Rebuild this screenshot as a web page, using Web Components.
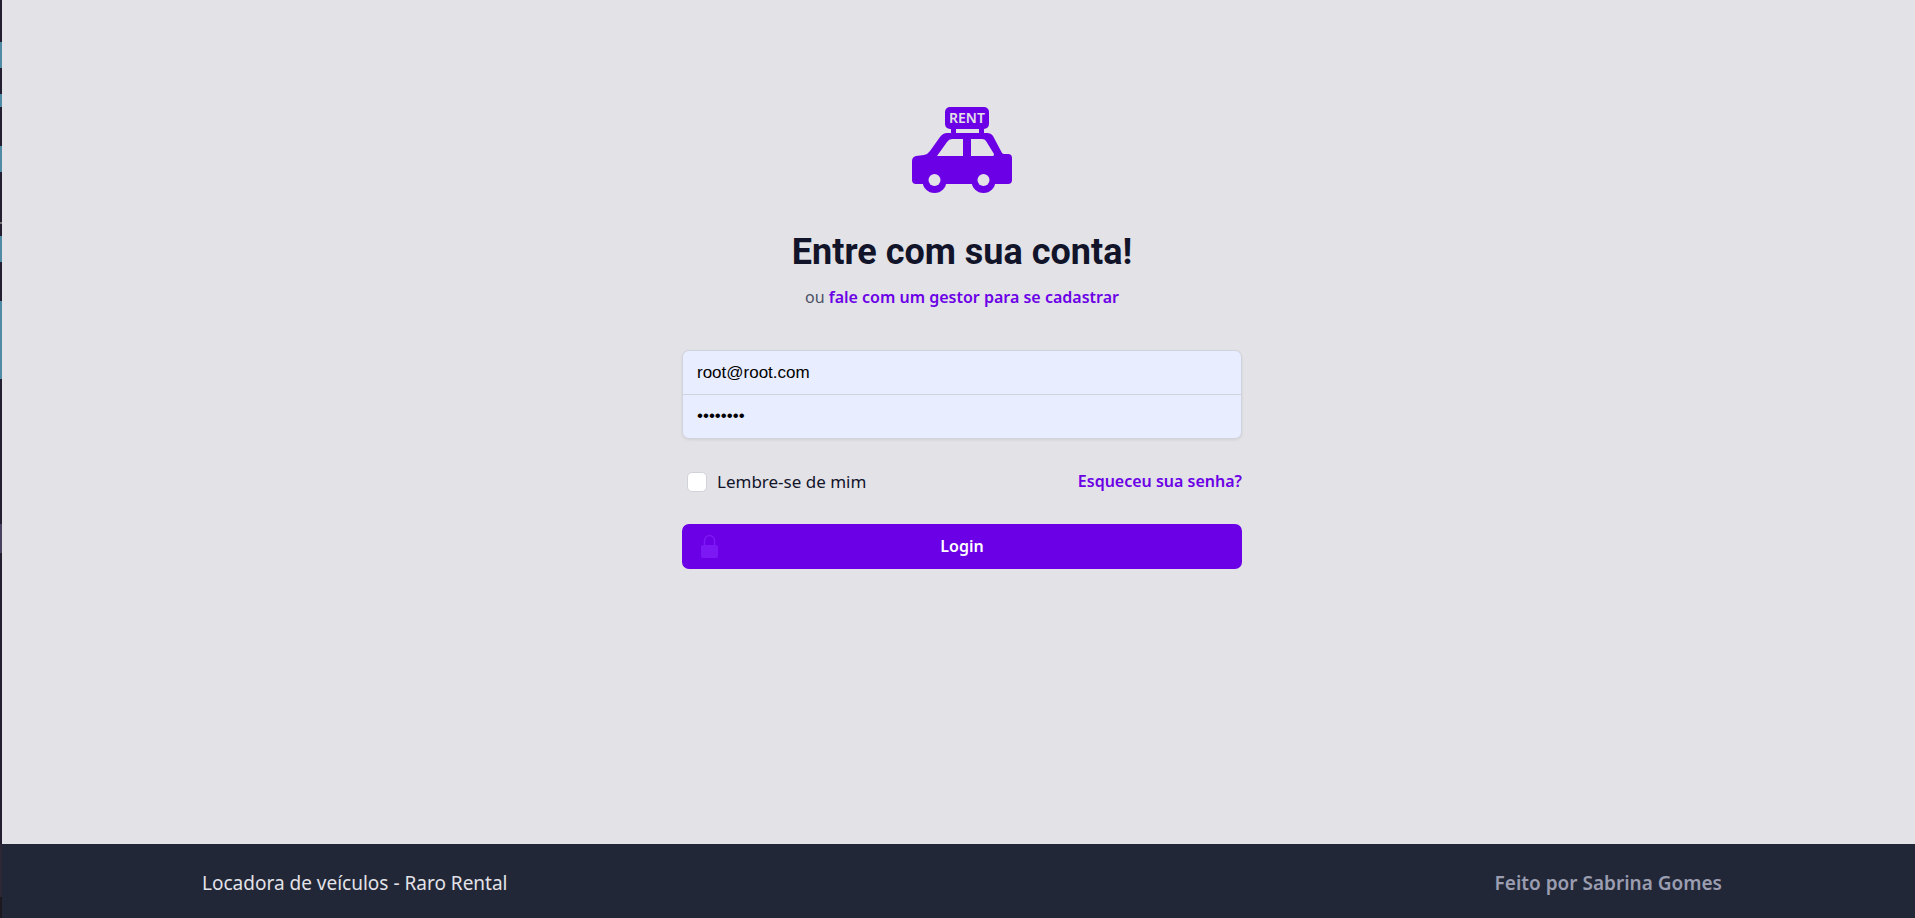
<!DOCTYPE html>
<html lang="pt-BR">
<head>
<meta charset="utf-8">
<meta name="viewport" content="width=device-width, initial-scale=1">
<title>Raro Rental</title>
<style>
  html, body { margin: 0; height: 100%; }
  body { background: #e3e2e7; color: #12142a; font-family: "Noto Sans", "Open Sans", sans-serif; }
</style>
</head>
<body>
<rental-page>
  <login-card slot="content">
    <rental-logo slot="logo"></rental-logo>
    <span slot="title">Entre com sua conta!</span>
  </login-card>
  <rental-footer slot="footer">
    <span>Locadora de veículos - Raro Rental</span>
    <strong slot="author">Feito por Sabrina Gomes</strong>
  </rental-footer>
</rental-page>

<script>
class BaseElement extends HTMLElement {
  constructor() {
    super();
    this.attachShadow({ mode: "open" }).innerHTML = this.constructor.markup;
  }
}

class RentalPage extends BaseElement {
  static markup = `
    <style>
      :host { display: flex; min-height: 100vh; }
      .edge {
        flex: none; width: 2px;
        background: linear-gradient(#231f31 0 42px, #4f8ba5 0 68px, #231f31 0 94px, #4f8ba5 0 107px,
          #231f31 0 146px, #4f8ba5 0 172px, #231f31 0 222px, #777479 0 224px, #231f31 0 236px,
          #4f8ba5 0 262px, #231f31 0 301px, #4f8ba5 0 379px, #231f31 0 524px, #48415f 0 553px,
          #231f31 0 844px, #2b2734 0 897px, #1b1820 0);
      }
      .page { flex: 1; min-width: 0; display: flex; flex-direction: column; }
      main { flex: 1; padding: 100px 16px 60px 23px; }
    </style>
    <div class="edge"></div>
    <div class="page">
      <main><slot name="content"></slot></main>
      <slot name="footer"></slot>
    </div>`;
}

class RentalLogo extends BaseElement {
  static markup = `
    <style>
      :host { display: block; width: 100px; height: 100px; color: #6b00e6; }
      svg { display: block; width: 100%; height: 100%; }
      text { font: 600 14px "Noto Sans", sans-serif; fill: #e3e2e7; }
    </style>
    <svg viewBox="0 0 100 100" role="img" aria-label="Rent">
      <g fill="currentColor">
        <rect x="33" y="7" width="44" height="22" rx="5"/>
        <path d="M39 28h5v5h23v-5h5v5h3q4 0 6 3L90 53q1 1 2 1h4q4 0 4 4v22q0 4-4 4H4q-4 0-4-4V61q0-4 4-5l8-1q4-1 6-4L28 37q3-4 7-4h4z"/>
        <circle cx="22.500" cy="81" r="12"/>
        <circle cx="71.500" cy="81" r="12"/>
      </g>
      <g fill="#e3e2e7">
        <path d="M25 56l10-14q2-3 5-3h11v17zM59 39h11q3 0 4 2l8 13q0 2-1 2H59z"/>
        <circle cx="22.500" cy="80" r="6"/>
        <circle cx="71.500" cy="80" r="6"/>
      </g>
      <text x="55" y="23" text-anchor="middle">RENT</text>
    </svg>`;
}

class LoginCard extends BaseElement {
  static markup = `
    <style>
      :host { display: block; max-width: 560px; margin: 0 auto; }
      * { box-sizing: border-box; }
      header { display: flex; flex-direction: column; align-items: center; text-align: center; }
      h1 { margin: 30px 0 0; font: 700 36px/45px Roboto, "Noto Sans", sans-serif; }
      p { margin: 10px 0 0; font-size: 16px; line-height: 25px; color: #4b5163; }
      a { color: #6b00e6; font-weight: 600; font-size: 16px; text-decoration: none; }
      form { display: grid; gap: 30px; margin-top: 40px; }
      .fields {
        border: 1px solid #d1d3db; border-radius: 7px; overflow: hidden;
        background: #e8eeff; box-shadow: 0 1px 3px rgb(0 0 0 / 8%);
      }
      .fields input {
        display: block; width: 100%; height: 43px; padding: 0 14px; border: 0; outline: 0;
        background: transparent; color: #000; font: 17px "Liberation Sans", Arial, sans-serif;
      }
      .fields input + input { height: 44px; padding-bottom: 2px; border-top: 1px solid #d1d3db; }
      .row { display: flex; align-items: center; justify-content: space-between; line-height: 25px; }
      label { display: flex; align-items: center; gap: 10px; font-size: 17px; }
      input[type=checkbox] {
        appearance: none; width: 20px; height: 20px; margin: 0 0 0 5px;
        background: #fff; border: 1px solid #d1d3db; border-radius: 5px;
      }
      input[type=checkbox]:checked { background: #6b00e6; }
      button {
        display: grid; grid-template-columns: 25px 1fr 25px; align-items: center;
        height: 45px; padding: 0 15px; border: 0; border-radius: 7px;
        background: #6b00e6; color: #fff; font: 600 16px/25px "Noto Sans", "Open Sans", sans-serif;
        cursor: pointer;
      }
      button svg { width: 25px; height: 25px; color: #7c18f3; }
    </style>
    <header>
      <slot name="logo"></slot>
      <h1><slot name="title"></slot></h1>
      <p>ou <a href="#cadastro">fale com um gestor para se cadastrar</a></p>
    </header>
    <form>
      <div class="fields">
        <input type="email" name="email" aria-label="E-mail" value="root@root.com">
        <input type="password" name="password" aria-label="Senha" value="rootroot">
      </div>
      <div class="row">
        <label><input type="checkbox" name="remember">Lembre-se de mim</label>
        <a href="#senha">Esqueceu sua senha?</a>
      </div>
      <button type="submit">
        <svg viewBox="0 0 25 25" aria-hidden="true">
          <path d="M7.500 12V6.500a5 5 0 0 1 10 0V12" fill="none" stroke="currentColor" stroke-width="1.500"/>
          <rect x="4" y="11" width="17" height="13" rx="2" fill="currentColor"/>
        </svg>
        <span>Login</span>
      </button>
    </form>`;
}

class RentalFooter extends BaseElement {
  static markup = `
    <style>
      :host { display: block; background: #212737; }
      footer {
        display: flex; flex-wrap: wrap; justify-content: space-between; gap: 8px 40px;
        max-width: 1520px; margin: 0 auto; padding: 24px 16px 20px 23px;
        font-size: 19px; line-height: 30px; color: #e3e2e7;
      }
      ::slotted(strong) { font-weight: 600; color: #9b9db0; }
    </style>
    <footer><slot></slot><slot name="author"></slot></footer>`;
}

customElements.define("rental-logo", RentalLogo);
customElements.define("login-card", LoginCard);
customElements.define("rental-footer", RentalFooter);
customElements.define("rental-page", RentalPage);
</script>
</body>
</html>
